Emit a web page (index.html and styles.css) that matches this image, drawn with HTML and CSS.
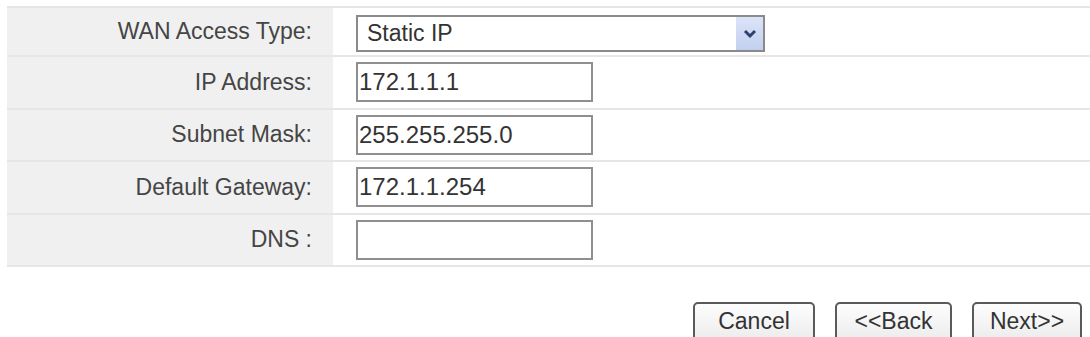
FILE: index.html
```html
<!DOCTYPE html>
<html lang="en">
<head>
    <meta charset="UTF-8">
    <title>WAN Setup</title>
    <link rel="stylesheet" href="styles.css">
</head>
<body>
    <div class="wan-form">
        <div class="row row-first">
            <div class="label">WAN Access Type:</div>
            <div class="field">
                <div class="select">
                    <span class="select-text">Static IP</span>
                    <span class="select-arrow">
                        <svg width="14" height="10" viewBox="0 0 14 10"><path d="M2 2 L7 7 L12 2" fill="none" stroke="#2d4170" stroke-width="3"/></svg>
                    </span>
                </div>
            </div>
        </div>
        <div class="row">
            <div class="label">IP Address:</div>
            <div class="field"><input class="text-input" type="text" value="172.1.1.1"></div>
        </div>
        <div class="row">
            <div class="label">Subnet Mask:</div>
            <div class="field"><input class="text-input" type="text" value="255.255.255.0"></div>
        </div>
        <div class="row">
            <div class="label">Default Gateway:</div>
            <div class="field"><input class="text-input" type="text" value="172.1.1.254"></div>
        </div>
        <div class="row row-last">
            <div class="label">DNS :</div>
            <div class="field"><input class="text-input" type="text" value=""></div>
        </div>
    </div>

    <div class="buttons">
        <button class="btn btn-cancel">Cancel</button>
        <button class="btn btn-back">&lt;&lt;Back</button>
        <button class="btn btn-next">Next&gt;&gt;</button>
    </div>
</body>
</html>
```

FILE: styles.css
```css
body {
    margin: 0;
    background: #ffffff;
    font-family: "Liberation Sans", Arial, sans-serif;
    color: #3a3a3a;
    overflow: hidden;
}
.wan-form {
    margin: 6px 0 0 7px;
}
.row {
    display: grid;
    grid-template-columns: 326px 1fr;
    height: 50.5px;
    border-top: 2px solid #e6e6e6;
}
.row-first {
    height: 47px;
}
.row-last {
    border-bottom: 2px solid #e6e6e6;
}
.label {
    background: #f0f0f0;
    display: flex;
    align-items: center;
    justify-content: flex-end;
    padding-right: 21px;
    font-size: 23px;
    color: #454545;
}
.field {
    display: flex;
    align-items: center;
    padding-left: 23px;
}
.select {
    width: 409px;
    height: 37px;
    box-sizing: border-box;
    border: 2px solid #8a8a8a;
    display: flex;
    align-items: center;
    justify-content: space-between;
    margin-top: 4px;
    background: #fff;
}
.select-text {
    font-size: 23px;
    padding-left: 9px;
    color: #333;
}
.select-arrow {
    width: 27px;
    height: 33px;
    background: linear-gradient(#dbe4f8, #c2d0f0);
    display: flex;
    align-items: center;
    justify-content: center;
}
.text-input {
    width: 237px;
    height: 40px;
    box-sizing: border-box;
    border: 2px solid #8f8f8f;
    padding: 0 0 0 1px;
    font-family: "Liberation Sans", Arial, sans-serif;
    font-size: 24px;
    color: #333;
    background: #fff;
}
.buttons {
    display: flex;
    justify-content: flex-end;
    gap: 20px;
    margin-top: 35px;
    padding-right: 8px;
}
.btn {
    height: 40px;
    border: 2px solid #5a5a5a;
    border-radius: 5px;
    background: linear-gradient(#fdfdfd, #ececec);
    font-family: "Liberation Sans", Arial, sans-serif;
    font-size: 23px;
    color: #333;
    padding: 0 0 2px 0;
}
.btn-cancel {
    width: 122px;
}
.btn-back {
    width: 117px;
}
.btn-next {
    width: 110px;
}
```
